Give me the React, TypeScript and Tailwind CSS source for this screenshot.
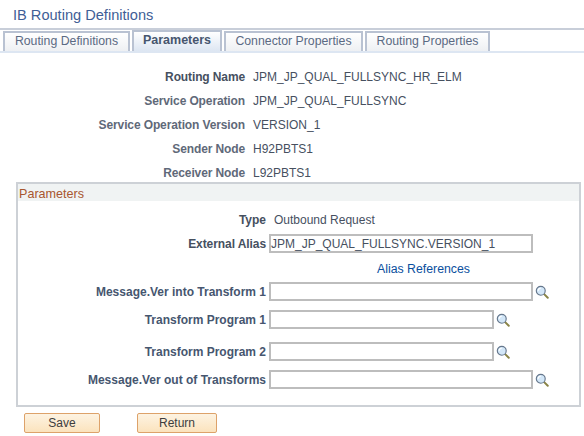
const font = 'font-["Liberation_Sans",Arial,sans-serif]';

const tabs = [
  { name: 'Routing Definitions', width: 'w-[127px]' },
  { name: 'Parameters', width: 'w-[90px]', active: true },
  { name: 'Connector Properties', width: 'w-[139px]' },
  { name: 'Routing Properties', width: 'w-[125px]' },
];

const infoRows = [
  ['Routing Name', 'JPM_JP_QUAL_FULLSYNC_HR_ELM', true],
  ['Service Operation', 'JPM_JP_QUAL_FULLSYNC', false],
  ['Service Operation Version', 'VERSION_1', false],
  ['Sender Node', 'H92PBTS1', false],
  ['Receiver Node', 'L92PBTS1', false],
] as const;

function SearchIcon() {
  return (
    <svg width="14" height="14" viewBox="0 0 17 17" className="ml-[2px] shrink-0">
      <path d="M10.5 10.5 L15.5 15.5" stroke="#8a8446" strokeWidth="2.4" strokeLinecap="round" />
      <circle cx="7" cy="7" r="5.4" fill="#d3e7f8" stroke="#66778c" strokeWidth="1.4" />
      <path d="M4 7 A3 3 0 0 1 7 4" fill="none" stroke="#ffffff" strokeWidth="1.4" />
    </svg>
  );
}

function LookupRow({ label, inputWidth, className }: { label: string; inputWidth: string; className: string }) {
  return (
    <div className={`flex items-center ${className}`}>
      <div className="w-[250px] text-right font-bold text-[#46566f]">{label}</div>
      <div className={`ml-[3px] h-[19px] border-2 border-[#bdbdbd] bg-white ${inputWidth}`} />
      <SearchIcon />
    </div>
  );
}

export default function App() {
  return (
    <div className={`w-[584px] h-[436px] overflow-hidden bg-white text-[12px] leading-[14px] text-[#46505f] ${font}`}>
      <div className="h-[30px] border-b-2 border-[#c8ced9] pl-[13px] pt-[6px] text-[14.6px] leading-[18px] text-[#3f5e96]">
        IB Routing Definitions
      </div>

      <div className="mt-[1px] flex h-[22px] gap-[2px] border-b-2 border-[#dde6f2] pl-[3px]">
        {tabs.map((tab) => (
          <div
            key={tab.name}
            className={
              tab.active
                ? `${tab.width} -mt-[1px] h-[21px] border-2 border-b-0 border-[#b9c2d2] bg-gradient-to-b from-[#ffffff] to-[#dde6f2] text-center text-[12.5px] font-bold leading-[16px] text-[#46566f]`
                : `${tab.width} h-[20px] border-2 border-b-0 border-[#b9c2d2] bg-gradient-to-b from-[#ffffff] to-[#eef0f3] text-center text-[12.3px] leading-[16px] text-[#5b6a83]`
            }
          >
            {tab.name}
          </div>
        ))}
      </div>

      <div className="mt-[17px] flex flex-col gap-[10px]">
        {infoRows.map(([label, value, dark]) => (
          <div key={label} className="flex h-[14px]">
            <div className={`w-[245px] text-right font-bold tracking-[-0.12px] ${dark ? 'text-[#46505f]' : 'text-[#5f6979]'}`}>{label}</div>
            <div className="ml-[8px]">{value}</div>
          </div>
        ))}
      </div>

      <div className="ml-[16px] mt-[2px] h-[225px] w-[565px] border-2 border-[#cdd1d6]">
        <div className="h-[17px] bg-[#f0f3f3] pl-[1px] text-[12.6px] leading-[20px] text-[#a8562f]">Parameters</div>

        <div className="relative -ml-[18px]">
          <div className="mt-[12px] flex h-[14px]">
            <div className="w-[266px] text-right font-bold">Type</div>
            <div className="ml-[8px]">Outbound Request</div>
          </div>

          <div className="mt-[7px] flex h-[19px] items-center">
            <div className="w-[266px] text-right font-bold tracking-[-0.08px]">External Alias</div>
            <div className="ml-[3px] h-[19px] w-[264px] border-2 border-[#bdbdbd] bg-white leading-[16px]">
              JPM_JP_QUAL_FULLSYNC.VERSION_1
            </div>
          </div>

          <div className="ml-[377px] mt-[9px] h-[14px] text-[12.3px] text-[#0a4f9e]">Alias References</div>
        </div>

        <div className="-ml-[2px]">
          <LookupRow label="Message.Ver into Transform 1" inputWidth="w-[264px]" className="mt-[6px] h-[19px]" />
          <LookupRow label="Transform Program 1" inputWidth="w-[225px]" className="mt-[9px] h-[19px]" />
          <LookupRow label="Transform Program 2" inputWidth="w-[225px]" className="mt-[13px] h-[19px]" />
          <LookupRow label="Message.Ver out of Transforms" inputWidth="w-[264px]" className="mt-[9px] h-[19px]" />
        </div>
      </div>

      <div className="ml-[24px] mt-[6px] flex gap-[37px]">
        <button className="h-[20px] w-[76px] rounded-[2px] border border-[#dda26a] bg-gradient-to-b from-[#fdf3e2] to-[#fbe3bd] text-center text-[12px] leading-[17px] text-[#3d3d3d]">
          Save
        </button>
        <button className="h-[20px] w-[80px] rounded-[2px] border border-[#dda26a] bg-gradient-to-b from-[#fdf3e2] to-[#fbe3bd] text-center text-[12px] leading-[17px] text-[#3d3d3d]">
          Return
        </button>
      </div>
    </div>
  );
}
